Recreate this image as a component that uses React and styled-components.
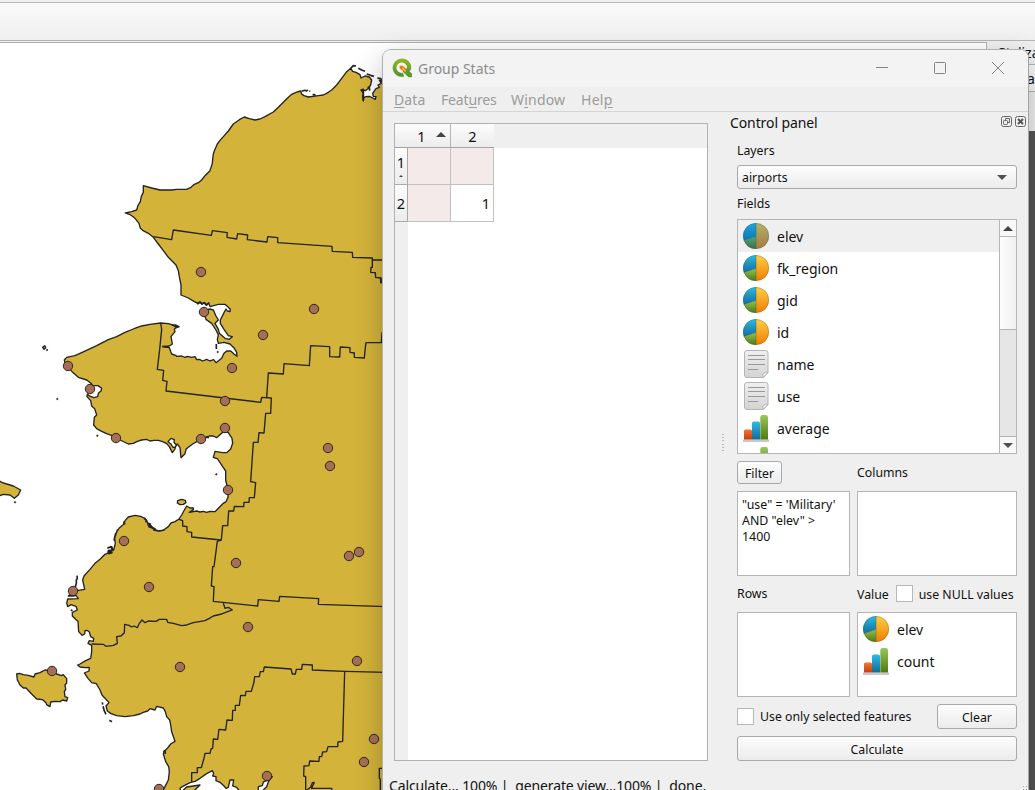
import React from "react";
import styled, { createGlobalStyle, css } from "styled-components";

const Global = createGlobalStyle`
  *, *::before, *::after { box-sizing: border-box; }
  html, body { margin: 0; overflow: hidden; }
  body { font-family: "Noto Sans", "Open Sans", sans-serif; color: #111; background: #fff; }
`;

const Desktop = styled.div`
  position: relative;
  width: 1035px;
  height: 790px;
  overflow: hidden;
  display: flex;
  flex-direction: column;
  background: #fff;
`;

const Toolbar = styled.div`
  flex: none;
  height: 41px;
  border-top: 2px solid #f0f0f0;
  border-bottom: 1px solid #b5b3b3;
  background: linear-gradient(#b9b9b9 0 1px, #fafafa 1px, #efefef 100%);
`;

const Workspace = styled.div`
  flex: 1;
  min-height: 0;
  display: flex;
  background: #efefef;
`;

const MapCanvas = styled.div`
  width: 987px;
  margin-top: 1px;
  border: solid #b1aeae;
  border-width: 1px 1px 0 0;
  background: #fff;
  overflow: hidden;
`;

const MapSvg = styled.svg`
  display: block;
  width: 400px;
  height: 747px;
`;

const StylingDock = styled.div`
  flex: 1;
  min-width: 0;
  display: flex;
  flex-direction: column;
  overflow: hidden;
  white-space: nowrap;
`;

const DockTitle = styled.div`
  height: 23px;
  padding-left: 11px;
  font-size: 14px;
  line-height: 23px;
`;

const DockLayer = styled.div`
  height: 28px;
  padding-left: 40px;
  border: solid #b4b4b4;
  border-width: 1px 0;
  background: #f7f7f7;
  font-size: 14px;
  letter-spacing: -0.4px;
  line-height: 27px;
`;

const DockBody = styled.div`
  margin-top: 39px;
  flex: 1;
  background: #555;
`;

const Dialog = styled.section`
  position: absolute;
  left: 382px;
  top: 49px;
  width: 647px;
  height: 800px;
  border: 1px solid #b0b0b0;
  border-right-color: #a4a4a4;
  border-radius: 9px;
  background: #efefef;
  box-shadow: 0 10px 28px rgba(0, 0, 0, 0.24);
  overflow: hidden;
`;

const TitleBar = styled.header`
  height: 37px;
  display: flex;
  align-items: center;
  padding: 0 23px 1px 9px;
  background: #f3f3f3;
`;

const WindowTitle = styled.h1`
  flex: 1;
  margin: 1px 0 0 5px;
  font-size: 14px;
  font-weight: 400;
  letter-spacing: -0.02px;
  color: #8a8a8a;
`;

const WindowButtons = styled.div`
  display: flex;
  gap: 44px;
  color: #858585;
  svg { display: block; }
`;

const MenuBar = styled.nav`
  height: 25px;
  display: flex;
  gap: 15px;
  padding: 0 11px;
  border-bottom: 1px solid #d5d5d5;
  font-size: 14px;
  line-height: 25px;
  color: #9b9b9b;
`;

const MenuItem = styled.span`
  width: ${(p) => p.$w}px;
  letter-spacing: ${(p) => p.$track || 0}px;
  white-space: nowrap;
  u { text-underline-offset: 2px; }
`;

const Body = styled.div`
  display: flex;
  height: 668px;
`;

const Main = styled.div`
  width: 325px;
  padding: 11px 0 0 11px;
`;

const ResultTable = styled.div`
  width: 314px;
  height: 638px;
  border: 1px solid #b1b1b1;
  background: linear-gradient(90deg, #efefef 13px, #fff 13px);
`;

const HeaderRow = styled.div`
  display: flex;
  height: 24px;
  background: #efefef;
`;

const headerFill = css`
  background: linear-gradient(#fcfcfc, #ececec);
  display: flex;
  align-items: center;
  justify-content: center;
  font-size: 14.5px;
`;

const ColumnHead = styled.div`
  ${headerFill}
  width: ${(p) => p.$w}px;
  padding-left: ${(p) => p.$inset || 0}px;
  border-right: ${(p) => (p.$last ? 0 : 1)}px solid #b5b5b5;
  border-bottom: 1px solid #a5a5a5;
  gap: 10px;
`;

const RowHead = styled.div`
  ${headerFill}
  width: 13px;
  flex-direction: column;
  gap: ${(p) => p.$gap || 0}px;
  padding-bottom: ${(p) => (p.$gap ? 2 : 0)}px;
  line-height: 16px;
  border: solid #a9a9a9;
  border-width: 0 1px 1px 0;
`;

const TableRow = styled.div`
  display: flex;
  height: 37px;
`;

const Cell = styled.div`
  width: ${(p) => p.$w}px;
  border: solid #c1c1c1;
  border-width: 0 1px 1px 0;
  background: ${(p) => (p.$empty ? "#f4eaea" : "#fff")};
  text-align: right;
  padding-right: 3px;
  font-size: 14.5px;
  line-height: 37px;
`;

const Triangle = styled.span`
  border: solid transparent;
  border-width: 0 ${(p) => p.$s || 5}px;
  ${(p) =>
    p.$down
      ? css`border-top: ${p.$h || 5}px solid #505050;`
      : css`border-bottom: ${p.$h || 5}px solid #444;`}
`;

const SortMark = styled.span`
  display: flex;
  margin-top: -3px;
`;

const Splitter = styled.div`
  width: 19px;
  padding: 322px 0 0 14px;
`;

const SplitterDots = styled.div`
  width: 2px;
  height: 18px;
  background: repeating-linear-gradient(#b8b8b8 0 1px, transparent 1px 3.2px);
`;

const StatusText = styled.footer`
  padding-left: 6px;
  margin-top: -3px;
  font-size: 14px;
  line-height: 18px;
  letter-spacing: -0.14px;
  white-space: pre;
`;

const Panel = styled.aside`
  width: 301px;
`;

const PanelTitle = styled.div`
  display: flex;
  align-items: center;
  height: 23px;
  padding: 0 0 2px 3px;
  font-size: 14px;
  span { flex: 1; letter-spacing: -0.1px; }
  svg { display: block; margin-right: 3px; margin-top: -3px; }
  svg:last-child { margin-right: 2px; }
`;

const PanelBody = styled.div`
  width: 290px;
  padding-left: 10px;
  font-size: 12.3px;
`;

const Label = styled.div`
  height: ${(p) => p.$h}px;
  padding-top: ${(p) => p.$drop || 0}px;
  line-height: ${(p) => p.$h}px;
  white-space: nowrap;
`;

const raised = css`
  border: 1px solid #a9a9a9;
  border-radius: 3px;
  background: linear-gradient(#fdfdfd, #ececec);
`;

const Select = styled.div`
  ${raised}
  height: 24px;
  display: flex;
  align-items: center;
  justify-content: space-between;
  padding: 0 9px 0 4px;
`;

const Frame = styled.div`
  border: 1px solid #b5b5b5;
  background: #fff;
  overflow: hidden;
`;

const FieldsBox = styled(Frame)`
  height: 235px;
  display: flex;
`;

const List = styled.div`
  flex: 1;
  overflow: hidden;
`;

const Item = styled.div`
  height: 32px;
  display: flex;
  align-items: center;
  gap: 8px;
  padding-left: 5px;
  background: ${(p) => (p.$active ? "#efefef" : "transparent")};
  font-size: 14px;
  span { padding-top: 1px; }
  svg { flex: none; }
`;

const ScrollBar = styled.div`
  width: 17px;
  border-left: 1px solid #b5b5b5;
  background: #e6e6e6;
  display: flex;
  flex-direction: column;
  justify-content: space-between;
`;

const ScrollButton = styled.div`
  height: 17px;
  display: flex;
  align-items: center;
  justify-content: center;
  background: #f8f8f8;
  border: solid #b5b5b5;
  border-width: ${(p) => (p.$end ? "1px 0 0" : "0 0 1px")};
`;

const Thumb = styled.div`
  height: 93px;
  margin-bottom: auto;
  border-bottom: 1px solid #b5b5b5;
  background: linear-gradient(90deg, #fdfdfd, #f0f0f0);
`;

const Button = styled.button`
  ${raised}
  width: ${(p) => p.$w}px;
  height: ${(p) => p.$h}px;
  padding: 1px 0 0;
  font: inherit;
  color: inherit;
`;

const Pair = styled.div`
  display: grid;
  grid-template-columns: 113px 160px;
  column-gap: 7px;
  align-items: center;
  height: ${(p) => p.$h}px;
  margin-top: ${(p) => p.$top || 0}px;
`;

const DropBox = styled(Frame)`
  height: 85px;
  ${(p) => p.$text && css`padding: 5px 4px; line-height: 16px; font-size: 12.4px; white-space: pre;`}
`;

const Inline = styled.div`
  display: flex;
  align-items: center;
  white-space: nowrap;
`;

const CheckBox = styled.span`
  width: 17px;
  height: 17px;
  margin: -1px 6px 0 ${(p) => p.$left || 0}px;
  border: 1px solid #b8b8b8;
  background: #fff;
`;

const Actions = styled.div`
  display: flex;
  align-items: center;
  justify-content: space-between;
  height: 25px;
  margin: 7px 0;
`;

const Grip = styled.div`
  position: absolute;
  right: 0;
  top: 735px;
  width: 6px;
  height: 6px;
  background: radial-gradient(circle, #aaa 0.8px, transparent 1px) 0 0 / 3px 3px;
`;

/* Coordinates below are in thirds of a pixel; each run of points is relative to a survey tile. */
const tile = (n, points) =>
  points
    .trim()
    .split(/\s+/)
    .map((p) => {
      const [x, y] = p.split(",").map(Number);
      return `${x},${y + n * 750}`;
    })
    .join(" ");

const mainland = [
  tile(0, `1210,150 1148,155 1138,150 1144,160 1134,165 1138,172 1128,176 1118,190 1120,199 1128,200 1126,208 1118,204 1108,199 1098,200
    1091,203 1090,213 1088,200 1090,190 1083,180 1096,182 1104,176 1112,165 1115,150 1108,141 1095,138 1083,144 1080,134 1068,127 1058,124 1052,115
    1040,125 1025,145 1010,165 996,179 985,187 970,195 955,197 940,199 925,201 912,197 905,192 902,183 888,187 875,193 862,205 850,217 835,232 820,246
    795,260 780,267 765,270 748,266 733,261 718,269 700,282 685,303 670,320 660,331 652,342 644,360 640,372 638,388 637,400 630,422 615,437
    605,450 595,458 583,463 573,472 560,478 530,478 515,480 480,480 455,474 430,467 430,487 424,499 421,515 414,526 410,540 395,545
    376,549 392,555 405,565 417,580 421,595 428,601 445,610 460,622 475,642 490,662 505,682 528,705 535,722 538,740 543,765 543,780`),
  tile(1, `543,45 565,54 583,65 590,68 594,72 600,67 606,73 612,68 620,76 626,68 630,80 655,73 675,73 685,82 691,88 690,95 682,93 678,87 672,98
    661,120 661,130 672,148 685,167 697,170 688,178 675,175 658,160 655,148 645,130 655,120 648,108 640,90 630,87 618,90 614,105 618,118 635,130
    648,150 655,165 652,178 655,190 672,187 690,192 703,205 710,217 711,229 702,222 692,213 680,213 672,220 665,235 648,248 641,239 630,243 620,238
    608,243 598,238 590,239 585,230 575,232 562,229 555,232 545,228 530,229 527,226 515,222 508,203 488,200 508,198 517,192 514,175 513,170
    525,155 523,148 530,142 515,134 505,131 482,129 450,133 425,138 400,147 375,157 350,170 325,179 290,197 245,218 225,227 200,232 193,240 195,252
    205,262 218,277 235,292 260,300 272,309 278,317 294,317 305,325 303,333 295,340 293,350 281,353 268,348 262,342 261,350 272,362 275,378 284,386
    290,405 283,412 281,435 290,446 305,454 320,461 345,470 360,480 385,492 400,490 412,484 425,480 440,478 450,483 462,481 475,481 488,485 500,491
    508,500 517,518 524,509 528,497 532,492 540,503 543,533 555,521 558,508 565,502 578,492 602,478 612,475 628,468 640,468 650,473 660,464 670,455
    685,458 696,475 698,490 692,507 680,518 668,518 645,514 640,532 653,537 668,560 677,573 677,600 684,630 684,652 678,665 670,670 658,682 645,695
    630,694 620,697 610,694 600,696 590,693 568,697 580,689 580,684 570,684 560,678 553,690 545,705 537,717 525,725 513,729 505,740 490,751
    472,752 460,747 455,739 445,737 443,727 437,719 432,714 422,709 405,706 385,711 375,722 371,733 357,745 346,762 342,780`),
  tile(2, `352,0 344,25 346,40 341,60 327,68 315,73 300,88 285,100 270,118 252,138 248,150 254,178 235,181 220,185 205,198 220,198 228,196
    235,206 203,207 200,220 203,230 213,224 228,229 232,240 217,247 217,258 227,268 234,274 236,305 246,316 254,312 255,302 261,301 268,306 272,320
    281,325 280,334 268,332 264,340 275,346 275,365 272,385 257,392 240,402 233,405 240,411 255,413 268,412 267,423 253,429 264,445
    275,458 289,461 300,480 306,495 327,518 318,528 322,543 333,551 350,557 375,560 400,557 420,552 430,547 443,543 450,536 465,540 470,529
    490,534 496,545 500,560 509,570 512,585 515,605 525,634 512,642 502,655 492,665 490,672 497,695 506,710 508,725 505,750 495,770 490,780
    490,830 550,830 540,775 547,770 570,758 585,754 600,745 620,731 637,722 641,730 638,738 648,740 648,752 660,757 672,768 678,775 685,772 690,750 701,750
    698,768 710,772 716,780 716,830 773,830 775,770 787,767 790,756 800,752 817,740 806,753 800,770 790,780 790,830 1210,830`),
].join(" ");

const borders = [
  tile(0, `460,620 515,629 520,600 634,616 637,602 682,608 681,622 710,627 713,611 743,615 742,629 801,636 803,620 833,623 833,638 996,649
    997,664 1057,667 1058,682 1117,684 1117,690 1155,690`),
  tile(0, `1117,690 1117,712 1113,712 1112,727 1126,728 1127,742 1143,744 1144,758 1160,758`),
  tile(1, `1142,-6 1142,8 1160,8`),
  tile(1, `800,352 805,279 850,282 852,251 928,257 932,197 989,200 989,230 1019,231 1021,201 1050,203 1050,217 1063,219 1063,232
    1093,234 1096,203 1098,188 1144,188 1146,158 1160,158`),
  tile(1, `482,129 485,148 479,208 472,268 491,271 488,301 501,304 498,333 782,367 785,352 814,354 812,400 797,400 792,459 777,458 774,487
    760,487 752,605 767,608 763,653 748,653 747,667 732,667 731,680 703,679 701,693 686,693 683,737 668,737 664,780 652,784 642,860 638,860
    634,918 642,920 640,964 773,978 775,959 837,964 839,949 956,956 955,973 1160,980`),
  tile(1, `537,718 548,722 548,738 561,740 561,755 575,757 575,771 662,780`),
  tile(2, `670,220 675,235 685,232 697,240 665,252 640,258 628,265 615,272 580,278 560,285 545,287 520,280 503,277 500,268 478,268 468,274
    445,273 435,278 426,270 418,280 412,293 402,288 395,291 387,286 374,283 373,308 363,318 350,320 352,340 340,346 318,349 310,343 275,342`),
  tile(2, `575,755 575,728 592,728 592,713 604,713 612,685 615,670 630,670 633,657 638,655 640,627 653,628 657,598 677,600 681,570 697,571
    698,541 706,541 706,526 718,526 722,496 736,497 738,484 754,484 762,456 764,440 778,440 781,425 790,425 793,411 873,417 877,432 886,432
    889,418 905,418 907,403 937,405 937,420 1034,424 1160,427`),
  tile(2, `1034,424 1028,634 1014,636 1013,650 984,650 980,665 968,666 965,680 958,680 957,694 929,693 927,707 912,708 911,738 917,740 917,790`),
  tile(2, `1160,715 1138,715 1138,745 1141,747 1141,790`),
  tile(2, `918,782 932,772 937,758 943,757 935,775 995,775 998,790`),
];

const islands = [
  tile(2, `50,432 58,430 70,434 85,436 102,441 105,432 120,428 135,420 145,422 155,415 170,432 185,437 190,434 200,446 200,460 195,464 197,478
    193,485 195,500 203,503 200,513 188,510 180,515 165,514 152,516 150,530 140,524 138,518 128,509 110,507 95,492 78,474 70,474 60,465 52,450`),
  tile(1, `-10,598 5,607 20,612 40,618 62,630 55,645 43,655 30,645 10,643 -10,650`),
  tile(1, `533,662 545,658 556,661 558,668 550,673 540,674 532,669`),
  tile(1, `128,202 134,197 137,203 132,208`),
  tile(2, `545,785 560,771 600,765 590,775 580,785`),
];

const lagoons = [tile(1, `504,485 513,475 523,479 522,487 529,495 525,503 518,501 512,491`)];

const strokes = [
  tile(0, `1052,115 1060,107 1068,108`),
  tile(0, `1075,115 1085,120 1095,124`),
  tile(0, `1100,132 1112,136 1122,139`),
  tile(0, `1132,144 1142,146 1148,153 1140,157`),
  tile(0, `1083,180 1090,178 1090,212`),
  tile(0, `1103,173 1108,171 1109,182`),
  tile(0, `905,184 914,181 920,183 923,179`),
  tile(0, `928,183 931,184`),
  tile(0, `938,196 942,193 947,197`),
  tile(1, `592,70 600,66 606,71 614,68 618,74 627,70`),
  tile(1, `515,135 526,135 537,140 526,143`),
  tile(1, `488,199 506,201`),
  tile(1, `649,192 649,207`),
  tile(1, `614,474 622,470 626,475`),
  tile(1, `433,713 440,722 437,727`),
  tile(1, `442,731 448,731 456,742 466,748 447,740 452,730`),
  tile(1, `371,724 375,733`),
  tile(2, `460,0 478,3 493,0`),
  tile(2, `322,55 332,50 338,60 325,62 336,68 327,71 323,64`),
  tile(2, `334,48 338,58`),
  tile(2, `231,137 232,145 229,150 229,160 224,178`),
  tile(2, `307,517 308,524`),
  tile(2, `309,529 313,543 318,553`),
  tile(2, `328,571 336,575`),
  tile(2, `490,665 495,662 496,672`),
];

const islets = [[141, 960], [172, 1107], [292, 1217], [45, 1417], [649, 1333], [653, 966], [215, 1741]];

const airports = [
  [201, 272], [314, 309], [204, 312], [263, 335], [68, 366], [232, 368], [90, 389], [225, 401], [225, 428], [116, 438],
  [201, 439], [328, 448], [330, 466], [228, 490], [124, 541], [349, 556], [359, 552], [236, 563], [73, 591], [149, 587],
  [248, 627], [180, 667], [357, 661], [52, 671], [374, 739], [364, 762], [267, 776], [159, 789],
];

function RegionMap() {
  return (
    <MapSvg viewBox="0 43 400 747">
      <g transform="translate(0 30) scale(0.33333)" stroke="#232323" strokeWidth="4" strokeLinejoin="round">
        <polygon points={mainland} fill="#d3b33a" />
        {islands.map((p, i) => <polygon key={i} points={p} fill="#d3b33a" />)}
        {lagoons.map((p, i) => <polygon key={i} points={p} fill="#fff" />)}
        {borders.map((p, i) => <polyline key={i} points={p} fill="none" />)}
        {strokes.map((p, i) => <polyline key={i} points={p} fill="none" strokeWidth="5" />)}
        {islets.map(([x, y]) => <circle key={x} cx={x} cy={y} r="2.2" fill="#232323" strokeWidth="2" />)}
      </g>
      {airports.map(([x, y]) => (
        <circle key={`${x}-${y}`} cx={x} cy={y} r="4.7" fill="#a56f56" stroke="#2c2522" strokeWidth="1" />
      ))}
    </MapSvg>
  );
}

const GradientDefs = styled.svg`
  position: absolute;
  width: 0;
  height: 0;
`;

function Gradients() {
  return (
    <GradientDefs aria-hidden="true">
      <defs>
        {[
          ["orange", "#fcd046", "#f57c00"], ["blue", "#2dbbe8", "#146c94"], ["green", "#94c04f", "#4d7b14"],
          ["tan", "#b0b36c", "#a9783f"], ["azure", "#1ca5e5", "#0f76ae"], ["moss", "#58a276", "#34714a"],
          ["red", "#f07a2e", "#c93a12"], ["leaf", "#9ac75b", "#4c7a14"], ["paper", "#f0f0f0", "#d3d3d3"],
          ["brand", "#94b823", "#4f9130"],
        ].map(([id, a, b]) => (
          <linearGradient key={id} id={id} x1="0" y1="0" x2="0" y2="1">
            <stop offset="0" stopColor={a} /><stop offset="1" stopColor={b} />
          </linearGradient>
        ))}
      </defs>
    </GradientDefs>
  );
}

function PieIcon({ active }) {
  const [right, top, low] = active ? ["tan", "azure", "moss"] : ["orange", "blue", "green"];
  return (
    <svg width="26" height="26" viewBox="0 0.5 26 26">
      <path d="M13 .5a13 13 0 0 1 0 26z" fill={`url(#${right})`} />
      <path d="M13 .5v13.6L.9 18.2A13 13 0 0 1 13 .5z" fill={`url(#${top})`} />
      <path d="M13 14.1v12.4A13 13 0 0 1 .9 18.2z" fill={`url(#${low})`} />
      <circle cx="13" cy="13.5" r="12.6" fill="none" stroke="#47554a" strokeOpacity=".4" strokeWidth=".7" />
      <path d="M13 .5v26M13 14.1.9 18.2" stroke="#365c50" strokeOpacity=".6" strokeWidth=".7" />
    </svg>
  );
}

function PageIcon() {
  return (
    <svg width="26" height="28" viewBox="0 0 26 28">
      <path d="M4 .5h18.500a2.500 2.500 0 0 1 2.500 2.500v20l-4.500 4.500H4A2.500 2.500 0 0 1 1.500 25V3A2.500 2.500 0 0 1 4 .5z" fill="url(#paper)" stroke="#b5b5b5" />
      <path d="M20 27.500V24.500q0-1.800 1.800-1.800H25z" fill="#fafafa" stroke="#b0b0b0" strokeWidth=".8" />
      <path d="M5 5.500h17M5 9.500h17M5 14.500h17M5 19.500h10" stroke="#999" />
    </svg>
  );
}

function BarsIcon() {
  return (
    <svg width="26" height="28" viewBox="0 0 26 28">
      <path d="M0 25.500h26V28H0z" fill="#c9c9c9" />
      <path d="M1 25.500V17q0-1.500 1.500-1.500H7.500q1.500 0 1.500 1.500v8.500z" fill="url(#red)" />
      <path d="M9 25.500V9.300Q9 7.500 10.800 7.500h4.400Q17 7.500 17 9.300V25.500z" fill="url(#blue)" />
      <path d="M17.300 25.500V3.300q0-2.300 2.300-2.300h3.100q2.300 0 2.300 2.300V25.500z" fill="url(#leaf)" />
    </svg>
  );
}

const icons = { pie: PieIcon, page: PageIcon, bars: BarsIcon };

function FieldItem({ icon, label, active }) {
  const Icon = icons[icon];
  return (
    <Item $active={active}>
      <Icon active={active} />
      <span>{label}</span>
    </Item>
  );
}

function Logo() {
  return (
    <svg width="21" height="20" viewBox="0 0 21 20">
      <path d="M12.200 18.500A9.300 9.100 0 1 1 19 11.500L16.800 13.900 14.600 11.700A5.300 5.200 0 1 0 10.800 14.800z" fill="url(#brand)" />
      <path d="M11 10.600h3.800l5.200 5.100v3.500h-3.500L11 13.900z" fill="#5c9b30" />
      <path d="M7.600 7.800h3.300l3.300 3.300-.8 2.200-2.700-.2-3.100-2.800z" fill="#ee7913" />
      <path d="m10.300 10 3.400 3.400" stroke="#f8d33a" strokeWidth="1.300" />
    </svg>
  );
}

const fields = [
  ["pie", "elev"], ["pie", "fk_region"], ["pie", "gid"], ["pie", "id"],
  ["page", "name"], ["page", "use"], ["bars", "average"], ["bars", ""],
];

export default function App() {
  return (
    <Desktop>
      <Global />
      <Gradients />
      <Toolbar />
      <Workspace>
        <MapCanvas><RegionMap /></MapCanvas>
        <StylingDock>
          <DockTitle>Stylizacja</DockTitle>
          <DockLayer>airports</DockLayer>
          <DockBody />
        </StylingDock>
      </Workspace>

      <Dialog>
        <TitleBar>
          <Logo />
          <WindowTitle>Group Stats</WindowTitle>
          <WindowButtons>
            <svg width="14" height="14"><path d="M1 6.500h12" stroke="currentColor" /></svg>
            <svg width="14" height="14"><rect x="1.500" y="1.500" width="11" height="11" rx="1" fill="none" stroke="currentColor" /></svg>
            <svg width="14" height="14"><path d="m1 1 12 12M13 1 1 13" stroke="currentColor" /></svg>
          </WindowButtons>
        </TitleBar>
        <MenuBar>
          <MenuItem $w={32} $track={0.1}><u>D</u>ata</MenuItem>
          <MenuItem $w={55} $track={-0.15}>Feat<u>u</u>res</MenuItem>
          <MenuItem $w={55} $track={0.2}>W<u>i</u>ndow</MenuItem>
          <MenuItem $w={32} $track={0.3}>Hel<u>p</u></MenuItem>
        </MenuBar>
        <Body>
          <Main>
            <ResultTable>
              <HeaderRow>
                <ColumnHead $w={56} $inset={18}>1<SortMark><Triangle /></SortMark></ColumnHead>
                <ColumnHead $w={43} $last>2</ColumnHead>
              </HeaderRow>
              <TableRow>
                <RowHead $gap={5}>1<Triangle $s={2} $h={2} /></RowHead>
                <Cell $w={43} $empty />
                <Cell $w={43} $empty />
              </TableRow>
              <TableRow>
                <RowHead>2</RowHead>
                <Cell $w={43} $empty />
                <Cell $w={43}>1</Cell>
              </TableRow>
            </ResultTable>
          </Main>
          <Splitter><SplitterDots /></Splitter>
          <Panel>
            <PanelTitle>
              <span>Control panel</span>
              <svg width="11" height="11" fill="none" stroke="#666">
                <rect x=".5" y=".5" width="10" height="10" rx="2" />
                <rect x="2.500" y="4.500" width="4" height="4" rx=".8" /><path d="M4.500 4V2.500h4v4H7" />
              </svg>
              <svg width="11" height="11" fill="none" stroke="#666">
                <rect x=".5" y=".5" width="10" height="10" rx="2" />
                <path d="m3 3 5 5M8 3 3 8" stroke="#555" strokeWidth="2" />
              </svg>
            </PanelTitle>
            <PanelBody>
              <Label $h={30} $drop={1}>Layers</Label>
              <Select>airports<Triangle $down /></Select>
              <Label $h={30}>Fields</Label>
              <FieldsBox>
                <List>
                  {fields.map(([icon, label], i) => (
                    <FieldItem key={i} icon={icon} label={label} active={i === 0} />
                  ))}
                </List>
                <ScrollBar>
                  <ScrollButton><Triangle /></ScrollButton>
                  <Thumb />
                  <ScrollButton $end><Triangle $down /></ScrollButton>
                </ScrollBar>
              </FieldsBox>
              <Pair $h={23} $top={7}>
                <Button $w={45} $h={23}>Filter</Button>
                <Label $h={23}>Columns</Label>
              </Pair>
              <Pair $h={85} $top={7}>
                <DropBox $text>{"\"use\" = 'Military'\nAND \"elev\" >\n1400"}</DropBox>
                <DropBox />
              </Pair>
              <Pair $h={36}>
                <Label $h={36}>Rows</Label>
                <Inline>Value<CheckBox $left={7} />use NULL values</Inline>
              </Pair>
              <Pair $h={85}>
                <DropBox />
                <DropBox>
                  <FieldItem icon="pie" label="elev" />
                  <FieldItem icon="bars" label="count" />
                </DropBox>
              </Pair>
              <Actions>
                <Inline><CheckBox />Use only selected features</Inline>
                <Button $w={80} $h={25}>Clear</Button>
              </Actions>
              <Button $w={280} $h={25}>Calculate</Button>
            </PanelBody>
          </Panel>
        </Body>
        <StatusText>Calculate... 100% |  generate view...100% |  done.</StatusText>
        <Grip />
      </Dialog>
    </Desktop>
  );
}
